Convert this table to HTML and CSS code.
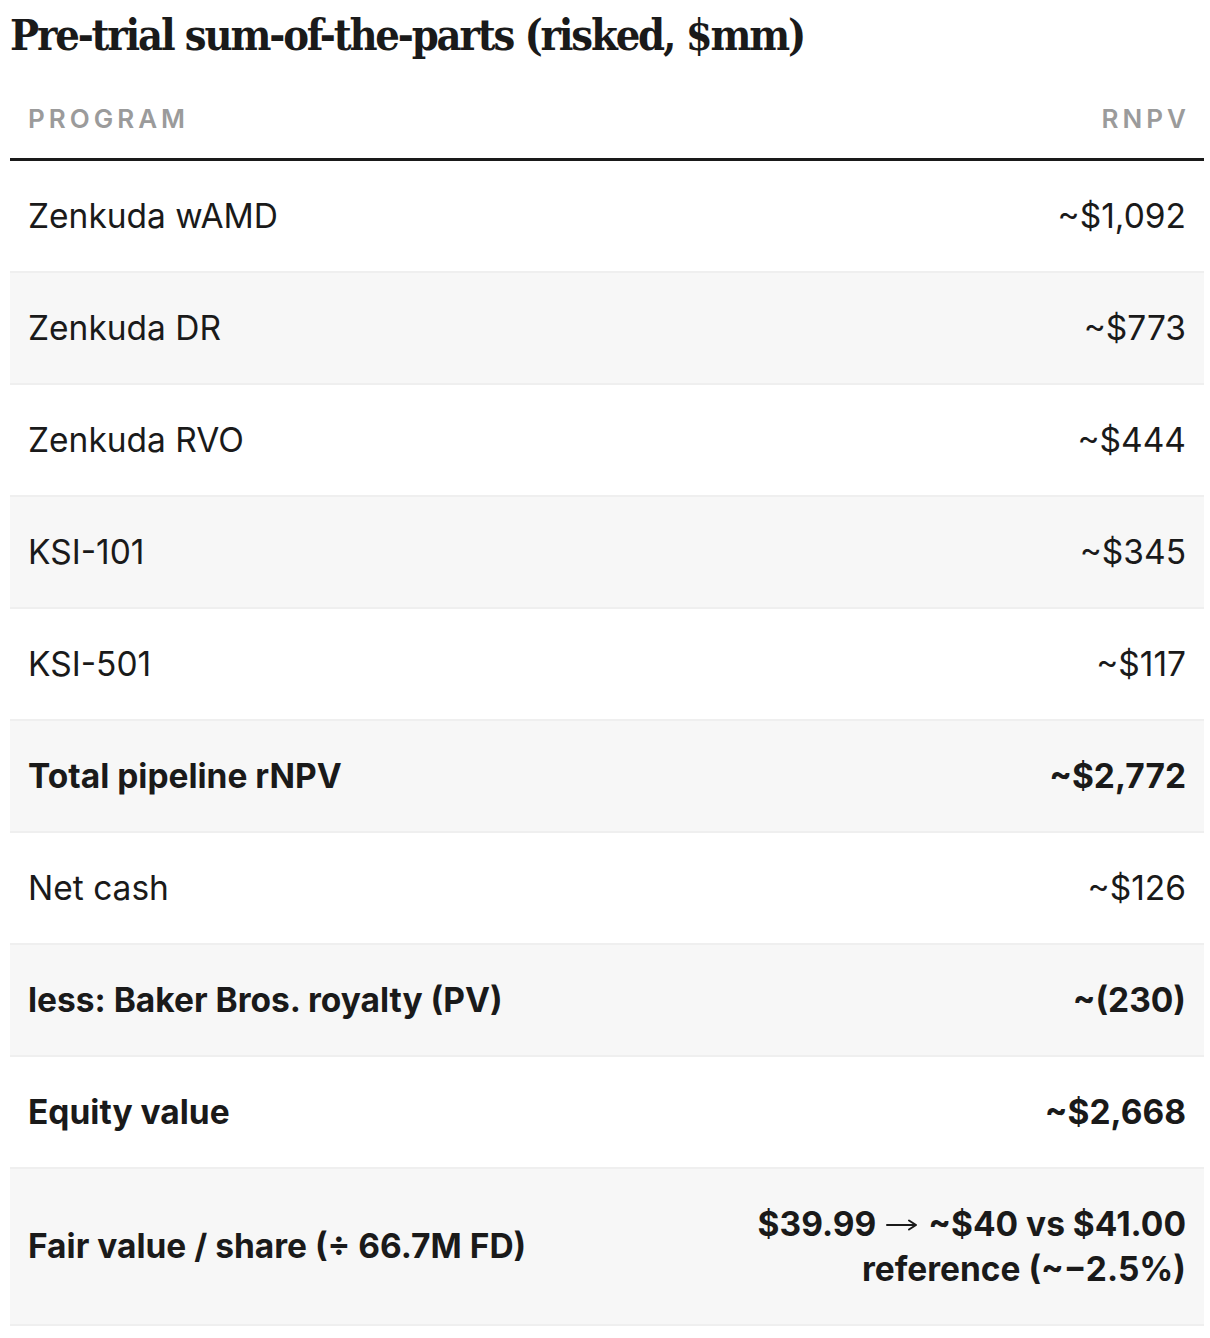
FILE: index.html
```html
<!DOCTYPE html>
<html lang="en">
<head>
<meta charset="utf-8">
<title>Pre-trial sum-of-the-parts</title>
<link rel="stylesheet" href="styles.css">
</head>
<body>
<div class="page">
  <h2 class="title">Pre-trial sum-of-the-parts (risked, $mm)</h2>
  <table class="sotp">
    <colgroup><col class="c1"><col class="c2"></colgroup>
    <thead>
      <tr><th class="lbl">Program</th><th class="val">rNPV</th></tr>
    </thead>
    <tbody>
      <tr><td class="lbl">Zenkuda wAMD</td><td class="val">~$1,092</td></tr>
      <tr class="alt"><td class="lbl">Zenkuda DR</td><td class="val">~$773</td></tr>
      <tr><td class="lbl">Zenkuda RVO</td><td class="val">~$444</td></tr>
      <tr class="alt"><td class="lbl">KSI-101</td><td class="val">~$345</td></tr>
      <tr><td class="lbl">KSI-501</td><td class="val">~$117</td></tr>
      <tr class="alt strong"><td class="lbl">Total pipeline rNPV</td><td class="val">~$2,772</td></tr>
      <tr><td class="lbl">Net cash</td><td class="val">~$126</td></tr>
      <tr class="alt strong"><td class="lbl">less: Baker Bros. royalty (PV)</td><td class="val">~(230)</td></tr>
      <tr class="strong"><td class="lbl">Equity value</td><td class="val">~$2,668</td></tr>
      <tr class="alt strong"><td class="lbl">Fair value / share (÷ 66.7M FD)</td><td class="val">$39.99<svg class="arrow" viewBox="0 0 32 14" width="32" height="14" aria-hidden="true"><path d="M1 7H30M23 2.5L30 7L23 11.5" fill="none" stroke="#1a1a1a" stroke-width="2" stroke-linecap="round" stroke-linejoin="round"/></svg>~$40 vs $41.00 reference (~−2.5%)</td></tr>
    </tbody>
  </table>
</div>
</body>
</html>
```
FILE: styles.css
```css
html, body {
  margin: 0;
  padding: 0;
  background: #ffffff;
}
.page {
  padding: 0 6px 0 10px;
  font-family: Inter, "Noto Sans", sans-serif;
  color: #1a1a1a;
}
.title {
  margin: 0;
  padding-top: 6px;
  font-family: "DejaVu Serif", "Liberation Serif", serif;
  font-stretch: condensed;
  font-weight: 700;
  font-size: 43px;
  line-height: 58px;
  letter-spacing: -2.15px;
  color: #1a1a1a;
}
.sotp {
  width: 100%;
  border-collapse: collapse;
  table-layout: fixed;
  margin-top: 16px;
}
.c1 { width: 50%; }
.c2 { width: 50%; }
.sotp th {
  padding: 24px 18px;
  font-size: 26px;
  line-height: 30px;
  font-weight: 600;
  letter-spacing: 4px;
  text-transform: uppercase;
  color: #9b9b9b;
  border-bottom: 3px solid #1a1a1a;
}
.sotp th.val {
  padding-right: 14px;
}
.sotp td {
  padding: 32.5px 18px;
  font-size: 33.5px;
  line-height: 45px;
  font-weight: 400;
  border-bottom: 2px solid #efefef;
  vertical-align: middle;
}
.lbl { text-align: left; }
.val { text-align: right; }
.sotp tr.alt td { background: #f7f7f7; }
.sotp tr.strong td { font-weight: 700; }
.arrow {
  display: inline-block;
  vertical-align: 4px;
  margin: 0 10px;
}
```
